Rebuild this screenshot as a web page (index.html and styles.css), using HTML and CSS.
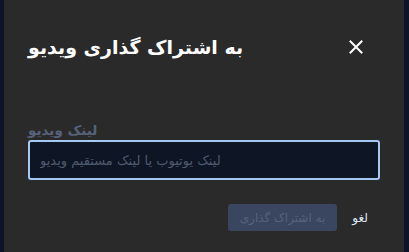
FILE: index.html
```html
<!DOCTYPE html>
<html lang="fa">
<head>
    <meta charset="UTF-8">
    <meta name="viewport" content="width=device-width, initial-scale=1.0">
    <title>Share Video</title>
    <link rel="stylesheet" href="styles.css">
</head>
<body>
    <div class="modal">
        <div class="modal-header">
            <h2 class="modal-title">به اشتراک گذاری ویدیو</h2>
            <button class="close-btn" aria-label="close">
                <svg width="14" height="14" viewBox="0 0 14 14">
                    <path d="M1.5 1.5 L12.5 12.5 M12.5 1.5 L1.5 12.5" stroke="#fff" stroke-width="2" stroke-linecap="square"/>
                </svg>
            </button>
        </div>
        <div class="modal-body">
            <label class="field-label" for="videoLink">لینک ویدیو</label>
            <input id="videoLink" class="field-input" type="text" placeholder="لینک یوتیوب یا لینک مستقیم ویدیو">
        </div>
        <div class="modal-footer">
            <button class="btn share-btn" disabled>به اشتراک گذاری</button>
            <button class="btn cancel-btn">لغو</button>
        </div>
    </div>
</body>
</html>
```

FILE: styles.css
```css
body {
    margin: 0;
    padding: 0 5px 0 4px;
    background-color: #0b1526;
    font-family: "DejaVu Sans", sans-serif;
}
.modal {
    background-color: #2a2a2a;
    height: 252px;
    padding: 0 24px;
    box-sizing: border-box;
}
.modal-header {
    display: flex;
    justify-content: space-between;
    align-items: center;
    padding-top: 32px;
}
.modal-title {
    margin: 0;
    font-size: 19px;
    line-height: 30px;
    font-weight: bold;
    color: #fff;
}
.close-btn {
    background: none;
    border: none;
    padding: 0;
    margin-right: 17px;
    width: 14px;
    height: 14px;
    display: flex;
    cursor: pointer;
}
.modal-body {
    margin-top: 60px;
    display: flex;
    flex-direction: column;
}
.field-label {
    font-size: 13.5px;
    font-weight: bold;
    line-height: 16px;
    color: #566279;
    margin-bottom: 2px;
}
.field-input {
    height: 40px;
    box-sizing: border-box;
    border: 2px solid #a6c9f4;
    border-radius: 3px;
    background-color: #0e1525;
    padding: 0 10px;
    font-family: "DejaVu Sans", sans-serif;
    font-size: 13px;
    color: #fff;
    outline: none;
}
.field-input::placeholder {
    color: #4f5a6e;
}
.modal-footer {
    display: flex;
    justify-content: flex-end;
    gap: 3px;
    margin-top: 24px;
}
.btn {
    font-family: "DejaVu Sans", sans-serif;
    font-size: 12px;
    height: 27px;
    padding: 0 12px;
    border: none;
    border-radius: 3px;
    cursor: pointer;
}
.share-btn {
    background-color: #3a4660;
    color: #56637a;
}
.cancel-btn {
    background: none;
    color: #dbe6f5;
}
```
